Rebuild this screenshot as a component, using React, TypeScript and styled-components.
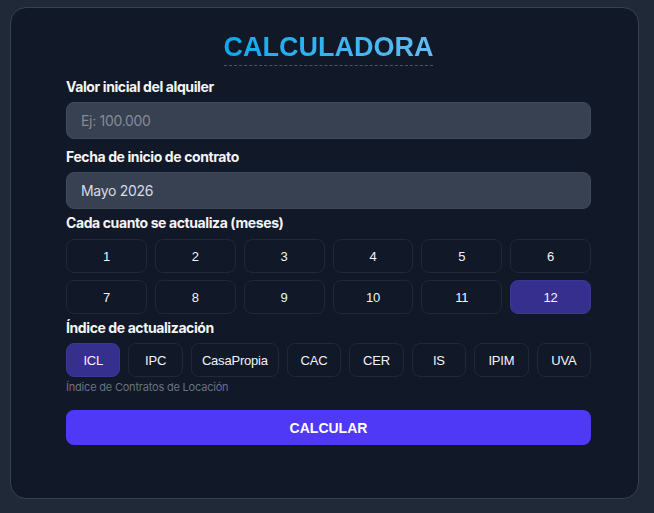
import { useState } from "react";
import styled, { createGlobalStyle } from "styled-components";

const GlobalStyle = createGlobalStyle`
  html, body {
    margin: 0;
    padding: 0;
    background: #1f2937;
    font-family: Inter, "Liberation Sans", Arial, sans-serif;
  }
  * {
    box-sizing: border-box;
  }
`;

const MONTHS = [1, 2, 3, 4, 5, 6, 7, 8, 9, 10, 11, 12];
const INDICES = ["ICL", "IPC", "CasaPropia", "CAC", "CER", "IS", "IPIM", "UVA"];

function App() {
  const [month, setMonth] = useState(12);
  const [index, setIndex] = useState("ICL");

  return (
    <Page>
      <GlobalStyle />
      <Card>
        <TitleRow>
          <Title>CALCULADORA</Title>
        </TitleRow>
        <Field $top={11}>
          <Label>Valor inicial del alquiler</Label>
          <Input type="text" placeholder="Ej: 100.000" />
        </Field>
        <Field $top={8}>
          <Label>Fecha de inicio de contrato</Label>
          <Input type="text" defaultValue="Mayo 2026" />
        </Field>
        <Field $top={4}>
          <Label>Cada cuanto se actualiza (meses)</Label>
          <MonthGrid>
            {MONTHS.map((m) => (
              <Choice key={m} $active={m === month} onClick={() => setMonth(m)}>
                {m}
              </Choice>
            ))}
          </MonthGrid>
        </Field>
        <Field $top={4}>
          <Label>Índice de actualización</Label>
          <IndexRow>
            {INDICES.map((i) => (
              <IndexChoice key={i} $active={i === index} onClick={() => setIndex(i)}>
                {i}
              </IndexChoice>
            ))}
          </IndexRow>
          <Hint>Índice de Contratos de Locación</Hint>
        </Field>
        <SubmitButton type="button">CALCULAR</SubmitButton>
      </Card>
    </Page>
  );
}
export default App;

const Page = styled.div`
  padding: 7px 15px 13px 10px;
  min-height: 513px;
`;

const Card = styled.div`
  background: #111827;
  border: 1px solid #374151;
  border-radius: 16px;
  padding: 23px 47px 53px 55px;
  display: flex;
  flex-direction: column;
`;

const TitleRow = styled.div`
  display: flex;
  justify-content: center;
`;

const Title = styled.h1`
  margin: 0;
  font-family: "Liberation Sans", Arial, sans-serif;
  font-size: 27px;
  font-weight: 700;
  line-height: 33px;
  padding-bottom: 1px;
  background: linear-gradient(to right, #0fa9ee, #63bcf2);
  -webkit-background-clip: text;
  background-clip: text;
  color: transparent;
  border-bottom: 1px dashed #4b5563;
`;

const Field = styled.div<{ $top: number }>`
  display: flex;
  flex-direction: column;
  margin-top: ${(p) => p.$top}px;
`;

const Label = styled.label`
  font-size: 14px;
  font-weight: 700;
  color: #f3f4f6;
  letter-spacing: -0.4px;
  line-height: 20px;
  margin-bottom: 5px;
`;

const Input = styled.input`
  height: 37px;
  width: 100%;
  background: #374151;
  border: 1px solid #3f4a5a;
  border-radius: 8px;
  padding: 0 14px;
  font-family: Inter, "Liberation Sans", Arial, sans-serif;
  font-size: 14px;
  letter-spacing: -0.3px;
  color: #d8dce3;
  outline: none;

  &::placeholder {
    color: #838b99;
  }
`;

const MonthGrid = styled.div`
  display: grid;
  grid-template-columns: repeat(6, 1fr);
  gap: 7px 8px;
  margin-top: 1px;
`;

const Choice = styled.button<{ $active?: boolean }>`
  height: 34px;
  border-radius: 8px;
  border: 1px solid ${(p) => (p.$active ? "#3e3596" : "#1f2937")};
  background: ${(p) => (p.$active ? "#372f8e" : "transparent")};
  color: #f3f4f6;
  font-family: "Liberation Sans", Arial, sans-serif;
  font-size: 13px;
  letter-spacing: -0.2px;
  cursor: pointer;
  padding: 0;
`;

const IndexRow = styled.div`
  display: flex;
  gap: 8px;
`;

const IndexChoice = styled(Choice)`
  flex: 1 1 0;
  min-width: auto;
  padding: 0 10px;
  white-space: nowrap;
`;

const Hint = styled.span`
  font-size: 11px;
  color: #6b7280;
  letter-spacing: -0.2px;
  margin-top: 3px;
  line-height: 14px;
`;

const SubmitButton = styled.button`
  margin-top: 16px;
  height: 35px;
  width: 100%;
  border: none;
  border-radius: 8px;
  background: #4f39f6;
  color: #ffffff;
  font-family: "Liberation Sans", Arial, sans-serif;
  font-size: 14px;
  font-weight: 700;
  cursor: pointer;
`;
